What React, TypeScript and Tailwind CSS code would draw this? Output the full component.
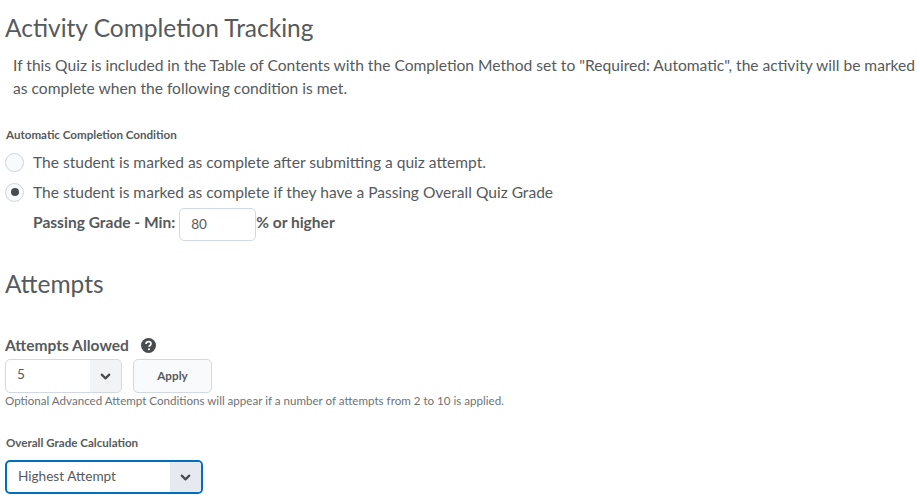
import { ChevronDown } from "lucide-react";

const FONT = "font-['Lato','Noto_Sans',sans-serif]";

function Radio({ checked, label }: { checked?: boolean; label: string }) {
    return (
        <div className="flex items-center gap-[9px] h-[20px]">
            <span className="flex items-center justify-center size-[19px] rounded-full border border-[#cdd5dc] bg-[#f9fafb]">
                {checked && <span className="size-[8px] rounded-full bg-[#494c4e]" />}
            </span>
            <span className="text-[15.55px] leading-[20px] text-[#565a5c]">{label}</span>
        </div>
    );
}

function SelectBox({ value, focused, width }: { value: string; focused?: boolean; width: string }) {
    return (
        <div
            className={`flex h-[34px] overflow-hidden rounded-[5px] bg-white ${width} ${
                focused ? "border-2 border-[#006fbf]" : "border border-[#d3d9e3]"
            }`}
        >
            <span className="flex-1 pl-[11px] text-[13.6px] leading-[28px] text-[#565a5c]">{value}</span>
            <span
                className={`flex w-[31px] items-center justify-center ${
                    focused ? "bg-[#e6e9ef]" : "bg-[#f1f3f5]"
                }`}
            >
                <ChevronDown className="size-[15px] text-[#494c4e]" strokeWidth={3.5} />
            </span>
        </div>
    );
}

export default function App() {
    return (
        <div className={`${FONT} h-[501px] w-[920px] overflow-hidden bg-white pl-[5px] pt-[13px]`}>
            <h2 className="text-[24.5px] leading-[30px] text-[#565a5c]">Activity Completion Tracking</h2>
            <p className="mt-[11px] ml-[8px] w-[915px] text-[15.6px] leading-[23px] text-[#565a5c]">
                If this Quiz is included in the Table of Contents with the Completion Method set to "Required: Automatic", the activity will be marked as complete when the following condition is met.
            </p>

            <h3 className="mt-[28px] ml-[1px] text-[11.6px] font-bold leading-[14px] text-[#565a5c]">
                Automatic Completion Condition
            </h3>
            <div className="mt-[10px] flex flex-col gap-[10px]">
                <Radio label="The student is marked as complete after submitting a quiz attempt." />
                <Radio checked label="The student is marked as complete if they have a Passing Overall Quiz Grade" />
            </div>
            <div className="mt-[6px] ml-[28px] flex items-start">
                <span className="mt-[3px] text-[15.55px] font-bold text-[#565a5c]">Passing Grade - Min:</span>
                <span className="ml-[4px] h-[33px] w-[77px] rounded-[5px] border border-[#d3d9e3] bg-white pl-[11px] text-[13.5px] leading-[31px] text-[#565a5c]">
                    80
                </span>
                <span className="mt-[3px] text-[15.55px] font-bold text-[#565a5c]">% or higher</span>
            </div>

            <h2 className="mt-[28px] text-[24.5px] leading-[30px] text-[#565a5c]">Attempts</h2>

            <div className="mt-[36px] flex items-center gap-[12px]">
                <span className="text-[15.55px] font-bold leading-[20px] text-[#565a5c]">Attempts Allowed</span>
                <svg viewBox="0 0 16 16" className="size-[15px]">
                    <circle cx="8" cy="8" r="8" fill="#494c4e" />
                    <path
                        d="M5.4 6.3c0-1.5 1.2-2.4 2.7-2.4s2.6.9 2.6 2.2c0 1.9-2.1 1.8-2.1 3.3"
                        fill="none"
                        stroke="#fff"
                        strokeWidth="1.8"
                    />
                    <circle cx="8.5" cy="12" r="1.1" fill="#fff" />
                </svg>
            </div>
            <div className="mt-[4px] flex gap-[11px]">
                <SelectBox value="5" width="w-[117px]" />
                <button className="h-[34px] w-[79px] rounded-[5px] border border-[#d3d9e3] bg-[#f9fafb] text-[11.7px] font-bold text-[#565a5c]">
                    Apply
                </button>
            </div>
            <p className="mt-[1px] text-[11.6px] leading-[14px] text-[#6e7376]">
                Optional Advanced Attempt Conditions will appear if a number of attempts from 2 to 10 is applied.
            </p>

            <h3 className="mt-[28px] ml-[1px] text-[11.6px] font-bold leading-[14px] text-[#565a5c]">
                Overall Grade Calculation
            </h3>
            <div className="mt-[10px]">
                <SelectBox value="Highest Attempt" focused width="w-[198px]" />
            </div>
        </div>
    );
}
